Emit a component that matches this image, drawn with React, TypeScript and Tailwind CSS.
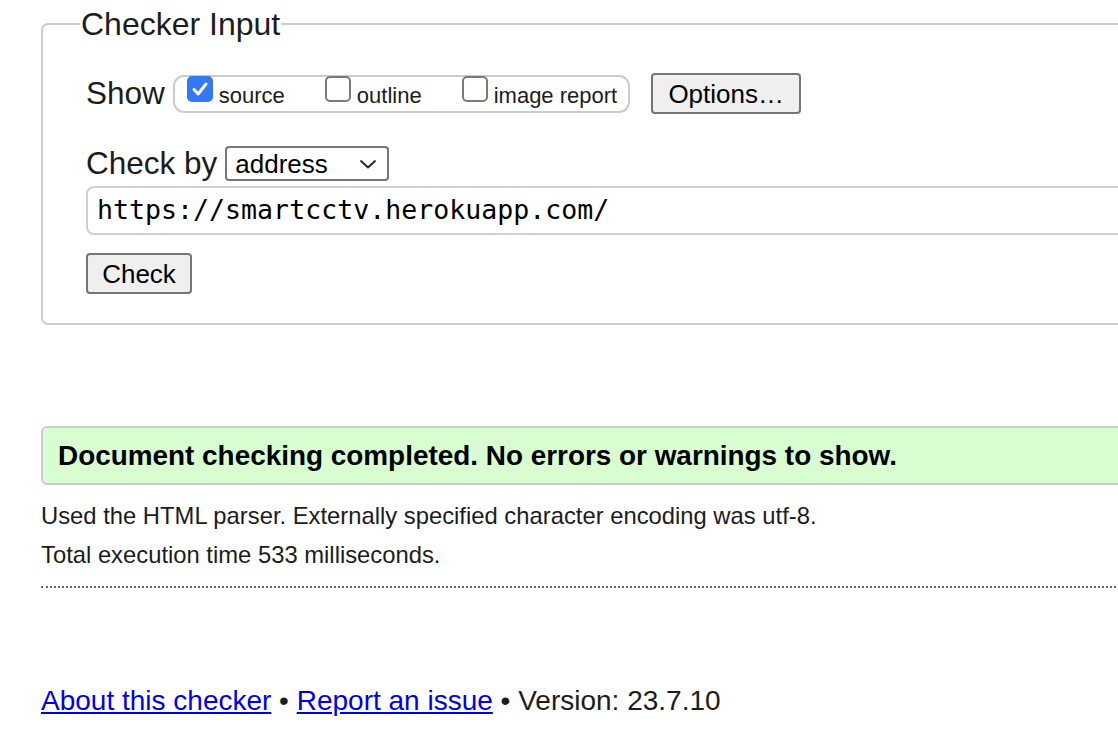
import React from 'react';

const sans = { fontFamily: '"Liberation Sans", Arial, sans-serif' };

const Check = ({ checked, label, className }: { checked?: boolean; label: string; className?: string }) => (
    <label className={`flex items-start ${className ?? ''}`}>
        {checked ? (
            <span className="-mt-[1px] w-[26px] h-[26px] rounded-[5px] bg-[#3478f6] flex items-center justify-center">
                <svg width="18" height="18" viewBox="0 0 18 18" fill="none">
                    <path d="M3 9.5 L7.2 14 L15 4" stroke="white" strokeWidth="3" strokeLinecap="round" strokeLinejoin="round" />
                </svg>
            </span>
        ) : (
            <span className="-mt-[1px] w-[26px] h-[26px] rounded-[5px] border-2 border-[#7a7a7a] bg-white" />
        )}
        <span className="ml-[6px] text-[22px] leading-none text-[#1c1c1c] mt-[8px]">{label}</span>
    </label>
);

export default function App() {
    return (
        <div className="w-full h-[738px] overflow-hidden bg-white text-[#1c1c1c]" style={sans}>
            <div className="w-[1300px] pl-[41px] pt-[8px]">
                <fieldset className="border-2 border-[#cccccc] rounded-[7px] pl-[43px] pb-[29px]">
                    <legend className="text-[32px] leading-[32px] -ml-[6px] px-[1px]">Checker Input</legend>

                    <div className="flex items-center mt-[33px] h-[41px]">
                        <span className="text-[31.5px] leading-none">Show</span>
                        <div className="ml-[8px] flex items-start h-[38px] border-2 border-[#cccccc] rounded-[11px] pl-[12px] pr-[11px]">
                            <Check checked label="source" />
                            <Check label="outline" className="ml-[40px]" />
                            <Check label="image report" className="ml-[40px]" />
                        </div>
                        <button className="ml-[21px] h-[41px] w-[150px] border-2 border-[#767676] rounded-[4px] bg-[#efefef] text-[26px] leading-none text-black">
                            Options…
                        </button>
                    </div>

                    <div className="flex items-center mt-[32px] h-[35px]">
                        <span className="text-[31.5px] leading-none">Check by</span>
                        <div className="ml-[8px] w-[164px] h-[35px] border-2 border-[#767676] rounded-[4px] flex items-center justify-between pl-[8px] pr-[10px] bg-white">
                            <span className="text-[26px] leading-none text-black">address</span>
                            <svg width="18" height="12" viewBox="0 0 18 12" fill="none">
                                <path d="M2 3 L9 9.5 L16 3" stroke="#222" strokeWidth="1.8" strokeLinecap="round" strokeLinejoin="round" />
                            </svg>
                        </div>
                    </div>

                    <div className="mt-[5px] h-[49px] w-[1150px] border-2 border-[#d0d0d0] rounded-[8px] flex items-center pl-[9px]">
                        <span className="text-[26.6px] leading-none text-black" style={{ fontFamily: '"DejaVu Sans Mono", monospace' }}>
                            https://smartcctv.herokuapp.com/
                        </span>
                    </div>

                    <button className="mt-[18px] h-[41px] w-[106px] border-2 border-[#767676] rounded-[4px] bg-[#efefef] text-[26px] leading-none text-black block">
                        Check
                    </button>
                </fieldset>

                <div className="mt-[101px] h-[59px] border-2 border-[#cccccc] rounded-[6px] bg-[#d8fdd0] flex items-center pl-[15px]">
                    <p className="text-[27.9px] font-bold leading-none text-black">
                        Document checking completed. No errors or warnings to show.
                    </p>
                </div>

                <p className="mt-[19px] text-[23.8px] leading-[24px]">
                    Used the HTML parser. Externally specified character encoding was utf-8.
                </p>
                <p className="mt-[15px] text-[23.8px] leading-[24px]">Total execution time 533 milliseconds.</p>

                <div className="mt-[19px] border-t-2 border-dotted border-[#666666]" />

                <p className="mt-[99px] text-[28px] leading-none">
                    <a href="#" className="text-[#0000ee] underline">About this checker</a>
                    {' • '}
                    <a href="#" className="text-[#0000ee] underline">Report an issue</a>
                    {' • Version: 23.7.10'}
                </p>
            </div>
        </div>
    );
}
